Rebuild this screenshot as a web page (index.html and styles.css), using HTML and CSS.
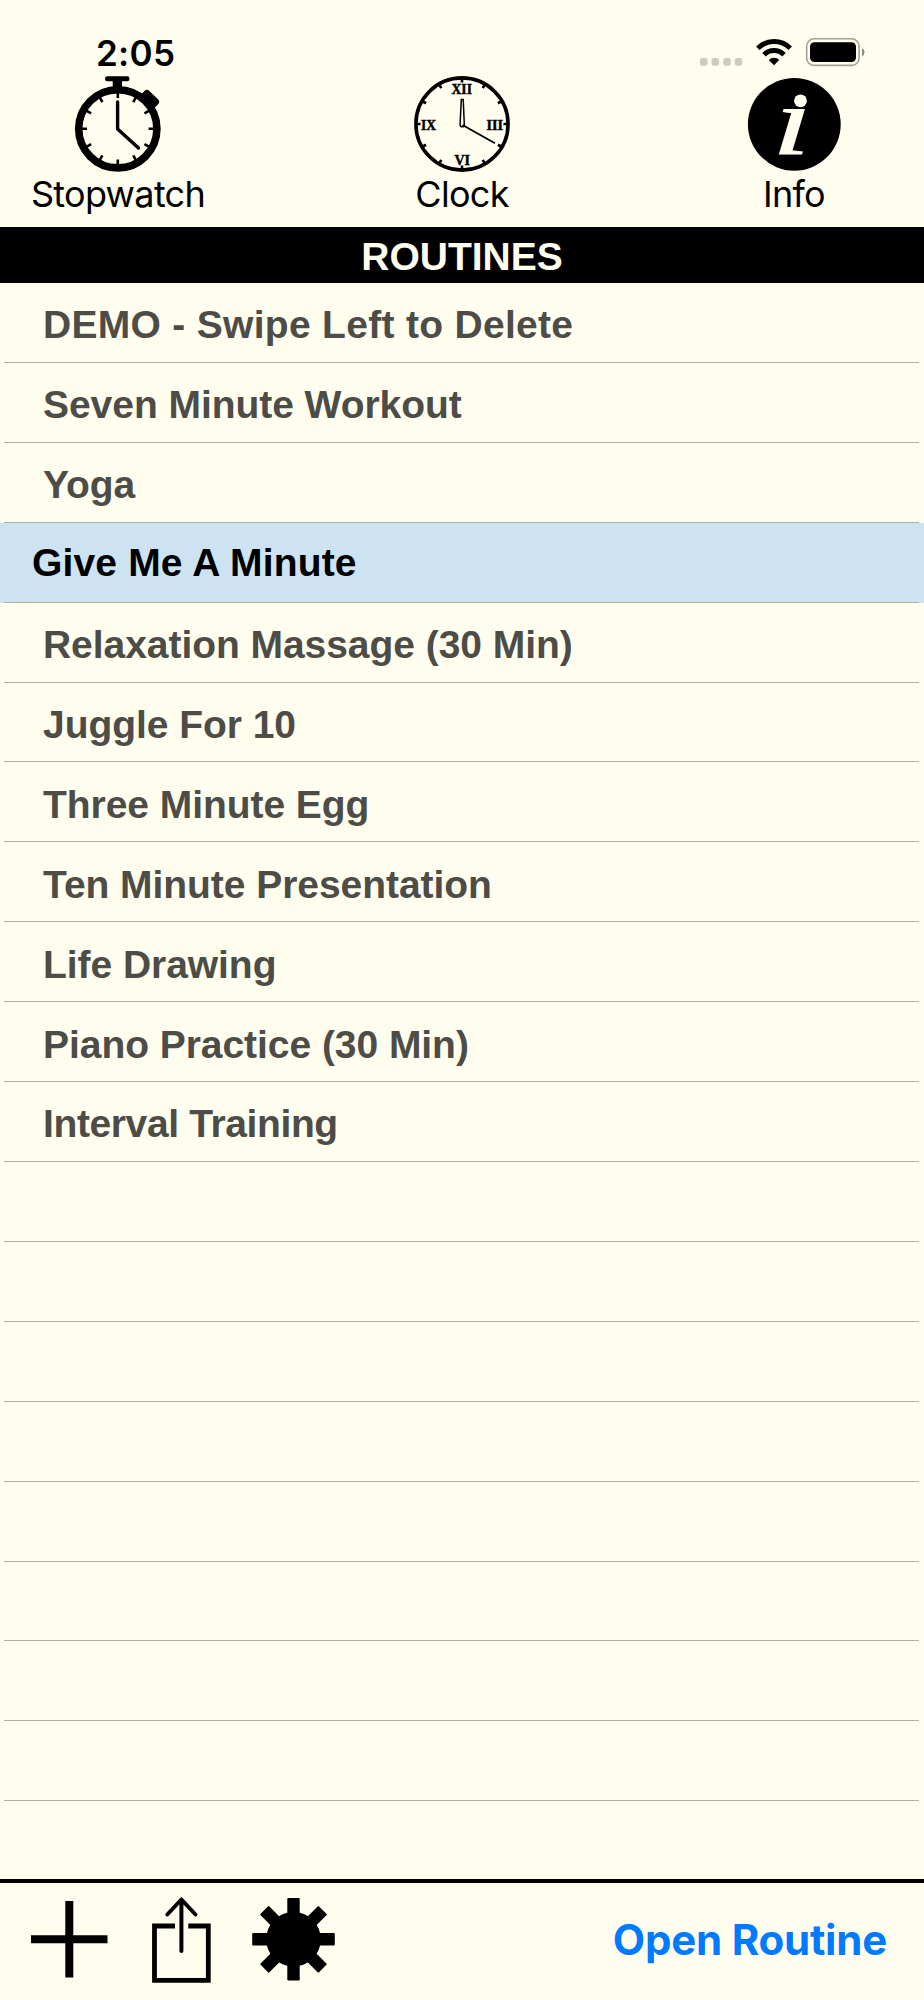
FILE: index.html
```html
<!DOCTYPE html>
<html lang="en">
<head>
  <meta charset="UTF-8">
  <meta name="viewport" content="width=device-width, initial-scale=1.0">
  <title>Routines</title>
  <link rel="stylesheet" href="styles.css">
</head>
<body>

<div class="status-bar">
  <span class="time">2:05</span>
  <svg class="status-icons" width="168" height="32" viewBox="698 36 168 32">
    <g fill="#cccbc0">
      <rect x="700" y="58" width="7.5" height="7.8" rx="2.2"/>
      <rect x="711.6" y="58" width="7.5" height="7.8" rx="2.2"/>
      <rect x="723.2" y="58" width="7.5" height="7.8" rx="2.2"/>
      <rect x="734.8" y="58" width="7.5" height="7.8" rx="2.2"/>
    </g>
    <g fill="none" stroke="#000" stroke-width="5">
      <path d="M757.8 48.2A23.2 23.2 0 0 1 790.2 48.2"/>
      <path d="M764 54.7A14.2 14.2 0 0 1 784 54.7"/>
    </g>
    <path d="M774 65.3l-5.2-5.4a7.6 7.6 0 0 1 10.4 0z"/>
    <rect x="806.7" y="38.8" width="52.4" height="26.6" rx="7.5" fill="none" stroke="#a2a197" stroke-width="1.6"/>
    <rect x="810" y="42.3" width="46" height="19.7" rx="4.5"/>
    <path d="M862 48a5 5 0 0 1 0 8.6z" fill="#8f8e86"/>
  </svg>
</div>

<div class="top-nav">
  <div class="nav-item">
    <svg width="96" height="100" viewBox="70 74 96 100">
      <rect x="105" y="76.3" width="24.5" height="5" rx="2.4"/>
      <rect x="112.7" y="79" width="9.3" height="10"/>
      <rect x="-9.5" y="-6" width="19" height="12" rx="3.5" transform="translate(149.5 99.5) rotate(44)"/>
      <circle cx="117.8" cy="128.8" r="39.1" fill="none" stroke="#000" stroke-width="7.6"/>
      <g stroke="#000" stroke-width="2.6">
        <path d="M117.8 92v6M117.8 159.6v6M81 128.8h6M148.6 128.8h6"/>
        <path d="M117.8 92v6M117.8 159.6v6M81 128.8h6M148.6 128.8h6" transform="rotate(30 117.8 128.8)"/>
        <path d="M117.8 92v6M117.8 159.6v6M81 128.8h6M148.6 128.8h6" transform="rotate(60 117.8 128.8)"/>
      </g>
      <path d="M117.6 102v26.9L138.5 148" fill="none" stroke="#000" stroke-width="3.4" stroke-linecap="round" stroke-linejoin="round"/>
    </svg>
    <span class="nav-label">Stopwatch</span>
  </div>
  <div class="nav-item">
    <svg width="96" height="100" viewBox="414 74 96 100">
      <circle cx="462" cy="124" r="46.1" fill="none" stroke="#000" stroke-width="3.6"/>
      <g stroke="#000" stroke-width="2.6">
        <path d="M462 78v4.5M462 165.5v4.5M416 124h4.5M503.5 124h4.5"/>
        <path d="M462 78v4.5M462 165.5v4.5M416 124h4.5M503.5 124h4.5" transform="rotate(30 462 124)"/>
        <path d="M462 78v4.5M462 165.5v4.5M416 124h4.5M503.5 124h4.5" transform="rotate(60 462 124)"/>
      </g>
      <g class="numerals">
        <text x="451.5" y="94.2" textLength="20.5" lengthAdjust="spacingAndGlyphs">XII</text>
        <text x="454.5" y="165" textLength="15.5" lengthAdjust="spacingAndGlyphs">VI</text>
        <text x="421" y="130" textLength="15" lengthAdjust="spacingAndGlyphs">IX</text>
        <text x="486.5" y="130" textLength="16.5" lengthAdjust="spacingAndGlyphs">III</text>
      </g>
      <path d="M461.3 99.5h1.9l1.1 24.5a2.2 2.2 0 1 1-4.2 0z" fill="none" stroke="#000" stroke-width="1.5"/>
      <path d="M462.5 125L495 143.3" stroke="#000" stroke-width="1.8"/>
    </svg>
    <span class="nav-label">Clock</span>
  </div>
  <div class="nav-item info-item">
    <svg width="96" height="100" viewBox="746 74 96 100">
      <circle cx="794.3" cy="124.3" r="46.4"/>
      <circle cx="800.5" cy="100.8" r="6.4" fill="#fffeee"/>
      <text class="info-i" transform="translate(772.5 154) skewX(-3) scale(1.4 1)">ı</text>
    </svg>
    <span class="nav-label">Info</span>
  </div>
</div>

<h1 class="list-title">ROUTINES</h1>

<ul class="routines">
  <li class="wide">DEMO - Swipe Left to Delete</li>
  <li>Seven Minute Workout</li>
  <li>Yoga</li>
  <li class="selected">Give Me A Minute</li>
  <li>Relaxation Massage (30 Min)</li>
  <li>Juggle For 10</li>
  <li>Three Minute Egg</li>
  <li>Ten Minute Presentation</li>
  <li>Life Drawing</li>
  <li>Piano Practice (30 Min)</li>
  <li class="tight">Interval Training</li>
  <li></li>
  <li></li>
  <li></li>
  <li></li>
  <li></li>
  <li></li>
  <li></li>
  <li></li>
</ul>

<div class="toolbar">
  <svg width="310" height="96" viewBox="30 1892 310 96">
    <path d="M31 1939.3h76.5M69.3 1901v76.5" stroke="#000" stroke-width="8"/>
    <g fill="none" stroke="#000">
      <path d="M175 1926h-20.5v54.3h53.8V1926h-20" stroke-width="4.8"/>
      <path d="M181.4 1951V1899.5M167.3 1914.5l14.1-15 14.1 15" stroke-width="4" stroke-linecap="round" stroke-linejoin="round"/>
    </g>
    <circle cx="293.5" cy="1939.3" r="27.3"/>
    <rect x="287.3" y="1898" width="12.4" height="82.6" rx="1"/>
    <rect x="287.3" y="1898" width="12.4" height="82.6" rx="1" transform="rotate(45 293.5 1939.3)"/>
    <rect x="287.3" y="1898" width="12.4" height="82.6" rx="1" transform="rotate(90 293.5 1939.3)"/>
    <rect x="287.3" y="1898" width="12.4" height="82.6" rx="1" transform="rotate(135 293.5 1939.3)"/>
  </svg>
  <a class="open-routine">Open Routine</a>
</div>

</body>
</html>
```
FILE: styles.css
```css
* {
  box-sizing: border-box;
}
body {
  margin: 0;
  height: 2000px;
  display: flex;
  flex-direction: column;
  background-color: #fffeee;
  color: #000;
  font-family: Inter, sans-serif;
}
svg {
  display: block;
  overflow: visible;
}
.status-bar {
  height: 74px;
  padding: 36px 58px 0 96px;
  display: flex;
  justify-content: space-between;
  align-items: flex-start;
}
.time {
  font-size: 35px;
  font-weight: 600;
  line-height: 34px;
  letter-spacing: 0.3px;
}
.top-nav {
  height: 153px;
  display: grid;
  grid-template-columns: 236px 1fr 236px;
}
.nav-item {
  display: flex;
  flex-direction: column;
  align-items: center;
}
.info-item {
  padding-right: 24px;
}
.nav-label {
  font-size: 36px;
  line-height: 40px;
  letter-spacing: -0.7px;
  white-space: nowrap;
}
.numerals {
  font-family: "Liberation Serif", serif;
  font-weight: bold;
  font-size: 15.5px;
  stroke: #000;
  stroke-width: 0.5px;
}
.info-i {
  font-family: "Liberation Serif", serif;
  font-style: italic;
  font-size: 97px;
  fill: #fffeee;
  stroke: #fffeee;
  stroke-width: 1px;
}
.list-title {
  margin: 0;
  height: 56px;
  background-color: #000;
  color: #fffeee;
  font-family: "Liberation Sans", Arial, sans-serif;
  font-size: 39px;
  font-weight: bold;
  line-height: 59px;
  text-align: center;
}
.routines {
  list-style: none;
  margin: 0;
  padding: 0;
  font-family: "Liberation Sans", Arial, sans-serif;
  font-size: 39px;
  font-weight: bold;
  color: #4d4c47;
}
.routines li {
  height: 79.92px;
  padding: 2.4px 0 0 43px;
  line-height: 80px;
  letter-spacing: -0.05px;
  white-space: nowrap;
  background: linear-gradient(#b1b0a6, #b1b0a6) 4px 100% / 915px 1px no-repeat;
}
.routines .wide {
  letter-spacing: 0.3px;
}
.routines .tight {
  letter-spacing: -0.38px;
}
.routines .selected {
  padding: 0 0 0 32px;
  letter-spacing: 0.16px;
  color: #000;
  background-color: #cde3f1;
}
.toolbar {
  margin-top: auto;
  height: 121px;
  padding: 9px 37px 0 30px;
  border-top: 4px solid #000;
  display: flex;
  justify-content: space-between;
}
.open-routine {
  color: #007aff;
  font-size: 42px;
  font-weight: bold;
  line-height: 95px;
  letter-spacing: -0.22px;
}
```
